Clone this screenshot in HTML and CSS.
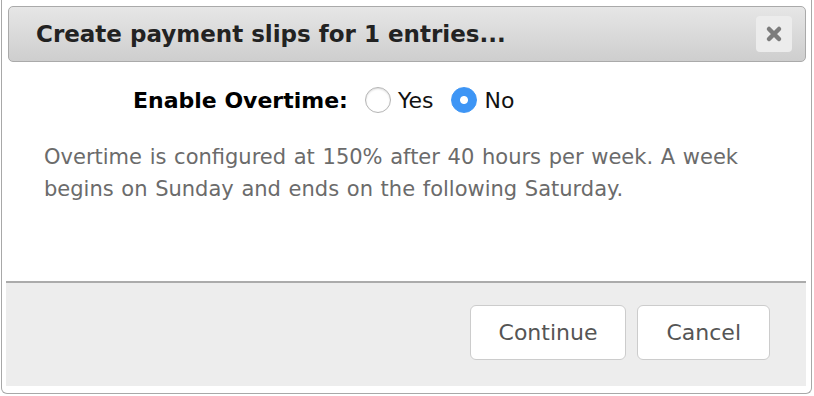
FILE: index.html
```html
<html><head>
<title>Create payment slips</title>
<link rel="stylesheet" href="styles.css">
</head>
<body>
<div class="dialog">
  <div class="titlebar">
    <span class="title">Create payment slips for 1 entries...</span>
    <button class="close" title="Close">
      <svg width="18" height="18" viewBox="0 0 18 18">
        <path d="M4 4 L14 14 M14 4 L4 14" stroke="#7c7c7c" stroke-width="4.5" stroke-linecap="round"/>
      </svg>
    </button>
  </div>

  <div class="content">
    <div class="option-row">
      <span class="option-label">Enable Overtime:</span>
      <label class="choice"><input type="radio" name="overtime" value="yes"> Yes</label>
      <label class="choice"><input type="radio" name="overtime" value="no" checked> No</label>
    </div>
    <p class="note">Overtime is configured at 150% after 40 hours per week. A week begins on Sunday and ends on the following Saturday.</p>
  </div>

  <div class="buttonpane">
    <button class="btn">Continue</button>
    <button class="btn">Cancel</button>
  </div>
</div>
</body></html>
```

FILE: styles.css
```css
body {
  margin: 0;
  padding: 0;
  background-color: #fff;
  font-family: "DejaVu Sans", Verdana, sans-serif;
  overflow: hidden;
}

.dialog {
  box-sizing: border-box;
  width: 811px;
  height: 394px;
  margin-left: 1px;
  border: 1px solid #a8a8a8;
  border-top: none;
  border-radius: 0 0 6px 6px;
  padding: 6px 5px 7px 4px;
  display: flex;
  flex-direction: column;
}

.titlebar {
  box-sizing: border-box;
  height: 56px;
  margin: 0 0 0 2px;
  border: 1px solid #aaa;
  border-radius: 5px;
  background: linear-gradient(#e6e6e6, #cecece);
  display: flex;
  align-items: center;
  justify-content: space-between;
  padding: 0 13px 0 27px;
}

.title {
  font-weight: bold;
  font-size: 23px;
  color: #222;
}

.close {
  width: 36px;
  height: 36px;
  border: none;
  border-radius: 4px;
  background-color: #ececec;
  display: flex;
  align-items: center;
  justify-content: center;
  padding: 0;
}

.content {
  flex: 1;
  padding: 25px 0 0 38px;
}

.option-row {
  display: flex;
  align-items: center;
  padding-left: 89px;
  font-size: 22px;
  color: #111;
}

.option-label {
  font-weight: bold;
  color: #000;
  margin-right: 17px;
}

.choice {
  display: flex;
  align-items: center;
  margin-right: 18px;
}

.choice input {
  appearance: none;
  -webkit-appearance: none;
  box-sizing: border-box;
  width: 26px;
  height: 26px;
  margin: 0 7px 0 0;
  border: 1px solid #b5b5b5;
  border-radius: 50%;
  background: #fff;
  box-shadow: inset 0 1px 2px rgba(0, 0, 0, 0.15);
}

.choice input:checked {
  border-color: #3d95f5;
  background: radial-gradient(circle, #fff 0, #fff 3.5px, #3d95f5 4.5px);
  box-shadow: none;
}

.note {
  margin: 28px 0 0 0;
  font-size: 21px;
  line-height: 32px;
  word-spacing: 1px;
  color: #6b6b6b;
  max-width: 728px;
}

.buttonpane {
  box-sizing: border-box;
  height: 105px;
  border-top: 2px solid #ababab;
  background-color: #ededed;
  display: flex;
  justify-content: flex-end;
  align-items: flex-start;
  padding: 22px 36px 0 0;
}

.btn {
  height: 55px;
  padding: 0 28px;
  margin-left: 11px;
  border: 1px solid #ccc;
  border-radius: 6px;
  background-color: #fff;
  font-family: "DejaVu Sans", sans-serif;
  font-size: 22px;
  color: #555;
}
```
